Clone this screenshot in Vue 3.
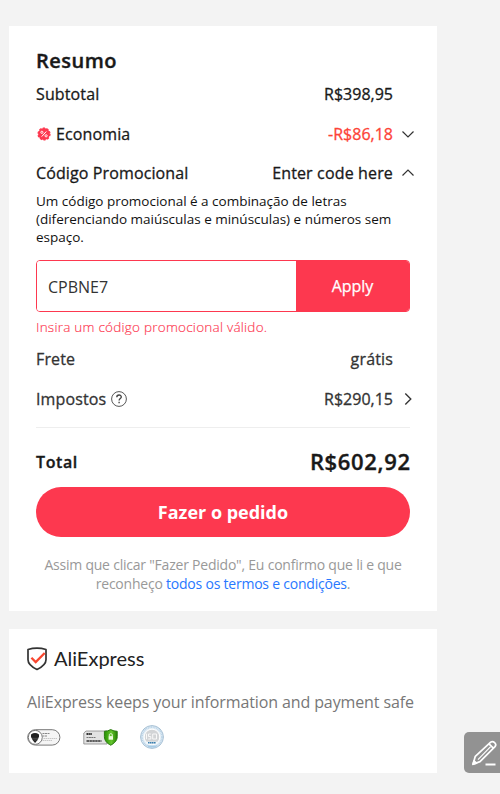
<script setup>
const description = 'Um código promocional é a combinação de letras (diferenciando maiúsculas e minúsculas) e números sem espaço.'
</script>

<template>
  <main class="page">
    <section class="card summary">
      <h1 class="title">Resumo</h1>
      <div class="row"><span class="label subtotal">Subtotal</span><span class="value">R$398,95</span></div>
      <div class="row">
        <span class="label saving">
          <svg class="percent" width="14" height="14" viewBox="0 0 14 14">
            <circle cx="7" cy="7" r="5.9" fill="#fd384f" stroke="#fd384f" stroke-width="1.4" stroke-dasharray="2.2 1.5" />
            <path d="M9.3 4.5 4.7 9.6" stroke="#fff" stroke-width="1" />
            <circle cx="4.9" cy="5.3" r="1.1" fill="none" stroke="#fff" stroke-width=".9" />
            <circle cx="9.1" cy="8.8" r="1.1" fill="none" stroke="#fff" stroke-width=".9" />
          </svg>Economia</span>
        <span class="value red">-R$86,18</span>
        <svg class="arrow" width="18" height="14" viewBox="0 0 18 14"><path d="M3.500 4.500 9 10l5.500-5.500" /></svg>
      </div>
      <div class="row">
        <span class="label promo">Código Promocional</span><span class="value words">Enter code here</span>
        <svg class="arrow" width="18" height="14" viewBox="0 0 18 14"><path d="M3.500 9.500 9 4l5.500 5.500" /></svg>
      </div>
      <p class="description">{{ description }}</p>
      <div class="coupon">
        <input class="code" type="text" value="CPBNE7" aria-label="Código Promocional" />
        <button class="apply" type="button">Apply</button>
      </div>
      <p class="error">Insira um código promocional válido.</p>
      <div class="row dim"><span class="label">Frete</span><span class="value words">grátis</span></div>
      <div class="row dim">
        <span class="label taxes">Impostos
          <svg class="help" width="16" height="16" viewBox="0 0 16 16" fill="none" stroke="#444">
            <circle cx="8" cy="8" r="7.400" stroke-width=".9" />
            <path d="M5.800 6.200C5.800 3.300 10.300 3.400 10.300 6c0 1.500-2.200 1.600-2.200 3.400M8.100 10.800v1.400" stroke-width="1.350" />
          </svg>
        </span>
        <span class="value">R$290,15</span>
        <svg class="arrow" width="18" height="14" viewBox="0 0 18 14"><path d="m6.300 1.500 5.500 5.500-5.500 5.500" stroke-width="1.350" /></svg>
      </div>
      <div class="total"><span class="total-label">Total</span><span class="amount">R$602,92</span></div>
      <button class="order" type="button">Fazer o pedido</button>
      <p class="terms">Assim que clicar "Fazer Pedido", Eu confirmo que li e que<br />reconheço <a>todos os termos e condições</a>.</p>
    </section>

    <section class="card safety">
      <div class="brand">
        <svg width="22" height="24" viewBox="0 0 22 24" fill="none">
          <path d="M11 1.200c3.500 0 6.300.5 9 1.300v10.200c0 5-4.500 7.600-9 9.800-4.500-2.200-9-4.800-9-9.800V2.500c2.700-.8 5.500-1.300 9-1.300Z" stroke="#333" stroke-width="1.700" stroke-linejoin="round" />
          <path d="m5.400 10.800 4.300 4.300 9-9.100" stroke="#f8462f" stroke-width="2.300" />
        </svg>
        <span class="brand-name">AliExpress</span>
      </div>
      <p class="safe">AliExpress keeps your information and payment safe</p>
      <div class="seals">
        <svg width="34" height="17" viewBox="0 0 34 17">
          <rect x=".7" y=".7" width="32.200" height="15.400" rx="7.700" fill="#f5f5f5" stroke="#777" />
          <circle cx="8.300" cy="8.400" r="7" fill="#fff" stroke="#777" />
          <path d="M4 5.500q4-2.800 8 0v2.300l-1.800 3.600-2.100 2.600-2.200-2.600L4 8Z" fill="#222" />
          <path d="M5 9.300h6.500M6.300 11h4" stroke="#777" stroke-width=".5" />
          <path d="M15.500 4.500h7M15.500 7h5" stroke="#888" stroke-width="1" stroke-dasharray="2 .5" />
          <path d="M14.500 9.500h16M15.500 11.500h10" stroke="#bbb" stroke-width=".8" stroke-dasharray="1.500 .5" />
        </svg>
        <svg class="ssl" width="35" height="17" viewBox="0 0 35 17">
          <defs><linearGradient id="seal-green"><stop stop-color="#269000" /><stop offset=".55" stop-color="#65c52e" /><stop offset="1" stop-color="#238000" /></linearGradient></defs>
          <path d="M3 2h21v13H.8V4Z" fill="#e2e2e2" stroke="#888" stroke-width=".8" />
          <path d="M3.500 5h5.500" stroke="#333" stroke-width="2" stroke-dasharray="1.500 .4" />
          <path d="M3.500 8.500h9" stroke="#777" stroke-dasharray="2 .4" />
          <path d="M3.500 12h15" stroke="#333" stroke-width="1.600" stroke-dasharray="2.500 .4" />
          <path d="M27.700.6q3.300 1.800 6.500 1.700v5.400c0 4-3 6.700-6.500 8.500-3.500-1.800-6.300-4.500-6.300-8.500V2.300Q24.500 2.400 27.700.6Z" fill="url(#seal-green)" stroke="#297b0f" />
          <path d="M25.600 7.100h4.400v3.600h-4.400Z" fill="#eafbdc" />
          <path d="M26.300 7V5.400q1.500-1.700 3 0V7" fill="none" stroke="#eafbdc" stroke-width=".9" />
        </svg>
        <svg class="iso" width="26" height="26" viewBox="0 0 26 26">
          <circle cx="13" cy="13" r="11.400" fill="#e5eff6" stroke="#a6bfd3" stroke-width="1" />
          <circle cx="13" cy="13" r="10" fill="none" stroke="#b9d2e6" stroke-width="1.800" stroke-dasharray="1 .7" />
          <circle cx="13" cy="13" r="7.800" fill="#d2d4d6" stroke="#fff" stroke-width="1" />
          <path d="M7.500 9.700v5.500M11.800 10h-2.300v2.500h2.300V15H9.200M17.500 10h-3.800v5h3.800Z" fill="none" stroke="#f8f8f8" stroke-width="1" />
          <path d="M7 17.700h11.500v2H7Z" fill="#f2f8fc" />
          <path d="M9 18.700h8" stroke="#397ead" stroke-width="1.400" stroke-dasharray="1.600 .4" />
          <path d="M7.500 21.500h11.300l-2.500 2H10Z" fill="#a8cce6" />
        </svg>
      </div>
    </section>

    <button class="edit" type="button" aria-label="Editar">
      <svg width="36" height="41" viewBox="0 0 36 41" fill="none" stroke="#fff" stroke-width="1.700" stroke-linejoin="round">
        <path d="m9 32.300 2.300-8L26.700 10.200q1.900-1.500 3.900.4 2.100 2 .4 4L16 29.600ZM25 11.800l4.600 4.500" />
        <path d="m9 32.300 1-3.500 2.500 2.300Z" fill="#fff" />
        <path d="M14 27.700 26.600 14.600" stroke-width="1.200" />
        <path d="M21.500 32.500h10" stroke-width="2" />
      </svg>
    </button>
  </main>
</template>

<style>
body { background: #f3f3f3; }
</style>

<style scoped>
.page { position: relative; box-sizing: border-box; width: 500px; height: 794px; padding: 26px 63px 21px 9px; display: flex; flex-direction: column; gap: 18px; background: #f3f3f3; font-family: "Open Sans", sans-serif; color: #191919; overflow: hidden; }
p, h1 { margin: 0; }
.card { box-sizing: border-box; background: #fff; }
.summary { height: 585px; padding: 20px 27px 0; }
.title { height: 28.500px; line-height: 29px; font-size: 20px; font-weight: 600; letter-spacing: .5px; -webkit-text-stroke: .4px; }
.row { display: flex; align-items: center; height: 39.500px; font-size: 16px; font-weight: 400; line-height: 22px; -webkit-text-stroke: .3px; }
.label { display: flex; align-items: center; letter-spacing: .12px; }
.value { margin-left: auto; margin-right: 17px; white-space: nowrap; }
.words { letter-spacing: .15px; }
.row:has(.arrow) .value { margin-right: 6px; }
.arrow { width: 18px; height: 14px; margin-right: -7px; fill: none; stroke: #333; stroke-width: 1.200; flex: none; }
.percent { margin: 0 5px 0 1px; }
.red { color: #fd4338; }
.description { height: 54px; margin-top: -1px; line-height: 18px; font-size: 13.500px; letter-spacing: -.01px; color: #111; }
.coupon { display: flex; box-sizing: border-box; height: 52px; margin-top: 14px; border: 1px solid #fd384f; border-radius: 4px; overflow: hidden; }
.code { box-sizing: border-box; min-width: 0; width: 259px; padding: 1px 11px 0; border: 0; outline: 0; color: #333; font: 400 16px "Open Sans", sans-serif; background: #fff; }
.apply { flex: 1; padding: 0; border: 0; background: #fd384f; color: #fff; font: 400 16px "Open Sans", sans-serif; -webkit-text-stroke: .25px; }
.error { height: 27.400px; line-height: 30px; font-size: 13.500px; font-weight: 300; letter-spacing: .24px; color: #fd384f; -webkit-text-stroke: .15px; }
.dim { color: #333; }
.help { margin-left: 5px; }
.total { display: flex; justify-content: space-between; align-items: center; height: 60.500px; margin-top: 8.600px; border-top: 1px solid #eee; box-sizing: border-box; padding-top: 8px; font-weight: 600; -webkit-text-stroke: .35px; }
.total-label { font-size: 16px; letter-spacing: .6px; }
.amount { font-size: 22px; letter-spacing: .65px; margin-right: -.65px; margin-top: -2px; }
.order { display: block; width: 374px; height: 49.500px; padding: 0; border: 0; border-radius: 25px; background: #fd384f; color: #fff; font: 700 18px "Open Sans", sans-serif; }
.terms { padding-top: 18.500px; text-align: center; color: #999; font-size: 14px; letter-spacing: -.22px; line-height: 19px; white-space: nowrap; }
.terms a { color: #2878ff; }
.safety { height: 144px; padding: 18px 18px 0; }
.brand { display: flex; align-items: center; height: 24px; gap: 6px; margin-left: -1px; }
.brand-name { font-family: Lato, sans-serif; font-size: 20px; line-height: 22px; margin-top: -2px; letter-spacing: 0; color: #222; }
.safe { height: 22px; margin-top: 20px; line-height: 22px; font-size: 16px; letter-spacing: -.11px; color: #777; white-space: nowrap; }
.seals { display: flex; align-items: center; height: 26px; margin-top: 11px; }
.ssl { margin-left: 22px; }
.iso { margin-left: 21px; }
.edit { position: absolute; left: 464px; top: 732px; width: 36px; height: 41px; padding: 0; border: 0; border-radius: 5px 0 0 5px; background: #929292; }
.edit svg { display: block; }
</style>
